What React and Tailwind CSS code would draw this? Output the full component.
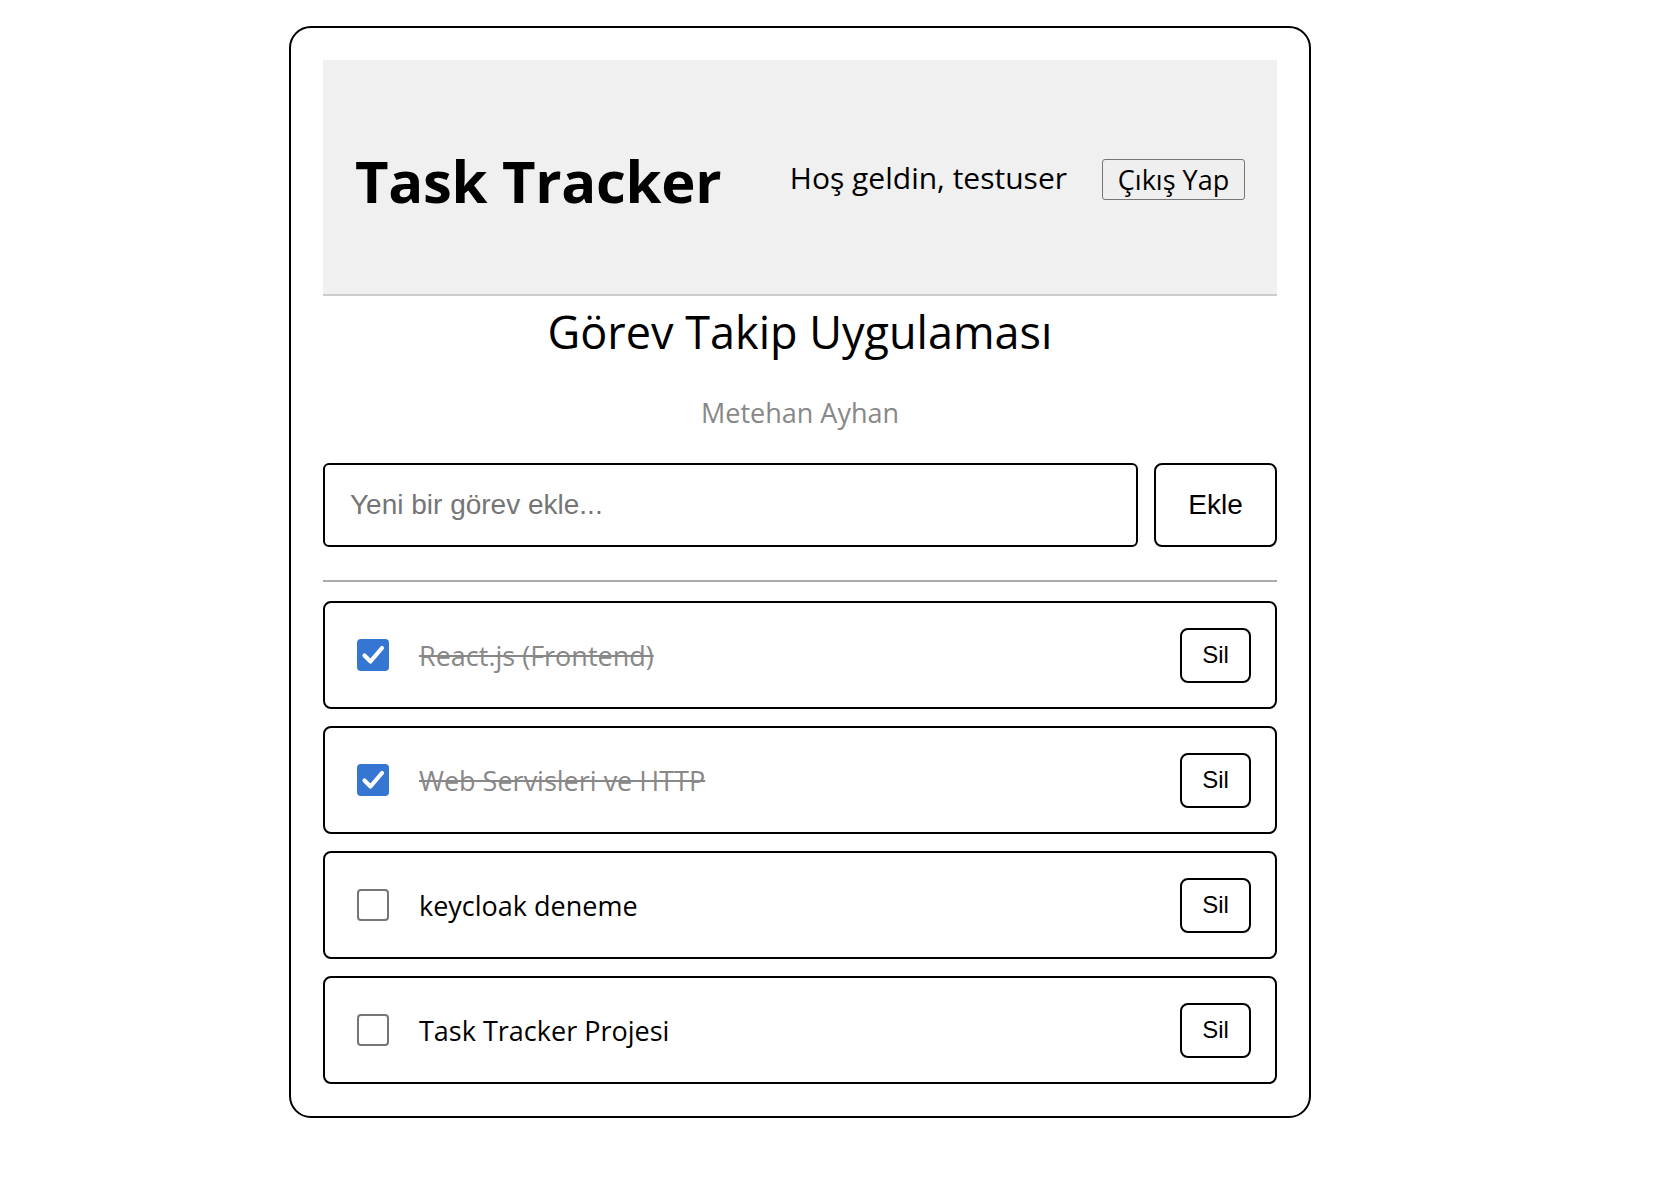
import React from "react";

const tasks = [
  { text: "React.js (Frontend)", done: true },
  { text: "Web Servisleri ve HTTP", done: true },
  { text: "keycloak deneme", done: false },
  { text: "Task Tracker Projesi", done: false },
];

function Checkbox({ checked }) {
  if (checked) {
    return (
      <span className="flex h-[32px] w-[32px] shrink-0 items-center justify-center rounded-[4px] bg-[#3476d2]">
        <svg width="32" height="32" viewBox="0 0 32 32" fill="none">
          <polyline
            points="7.5,16.5 13.5,22.5 25,9"
            stroke="white"
            strokeWidth="4.2"
            strokeLinecap="round"
            strokeLinejoin="round"
          />
        </svg>
      </span>
    );
  }
  return (
    <span className="h-[32px] w-[32px] shrink-0 rounded-[4px] border-2 border-[#767676] bg-white" />
  );
}

export default function App() {
  return (
    <div className="min-h-screen bg-white pt-[26px] font-['Open_Sans',sans-serif] text-black">
      <div className="ml-[289px] w-[1022px] rounded-[22px] border-2 border-black p-[32px]">
        <header className="flex h-[236px] items-center border-b-2 border-[#cccccc] bg-[#f0f0f0] px-[32px]">
          <h1 className="mt-[7px] text-[58px] font-bold leading-[80px] tracking-[-0.3px]">
            Task Tracker
          </h1>
          <span className="ml-auto text-[30px] leading-[41px]">Hoş geldin, testuser</span>
          <button
            type="button"
            className="ml-[35px] mt-[5px] flex h-[41px] w-[143px] items-center justify-center rounded-[3px] border-[1.5px] border-[#767676] bg-[#efefef] text-[27px] leading-[35px]"
          >
            Çıkış Yap
          </button>
        </header>

        <h2 className="mt-[6px] text-center text-[45px] font-normal leading-[60px]">
          Görev Takip Uygulaması
        </h2>
        <p className="mt-[33px] text-center text-[27px] leading-[36px] text-[#888888]">
          Metehan Ayhan
        </p>

        <div className="mt-[32px] flex gap-[16px]">
          <input
            type="text"
            placeholder="Yeni bir görev ekle..."
            className="h-[84px] min-w-0 flex-1 rounded-[6px] border-2 border-black bg-white px-[25px] font-['Liberation_Sans',Arial,sans-serif] text-[28px] outline-none placeholder:text-[#757575]"
          />
          <button
            type="button"
            className="flex h-[84px] w-[123px] items-center justify-center rounded-[8px] border-2 border-black bg-white font-['Liberation_Sans',Arial,sans-serif] text-[28px] leading-[32px]"
          >
            Ekle
          </button>
        </div>

        <div className="mt-[33px] h-[2px] bg-[#aaaaaa]" />

        <ul className="mt-[19px] flex flex-col gap-[17px]">
          {tasks.map((t) => (
            <li
              key={t.text}
              className="flex h-[108px] items-center rounded-[8px] border-2 border-black pl-[32px] pr-[24px]"
            >
              <Checkbox checked={t.done} />
              <span
                className={
                  "ml-[30px] mt-[2px] flex-1 text-[27px] leading-[38px] " +
                  (t.done ? "text-[#888888] line-through decoration-[#888888]" : "text-black")
                }
              >
                {t.text}
              </span>
              <button
                type="button"
                className="flex h-[55px] w-[71px] items-center justify-center rounded-[8px] border-2 border-black bg-white font-['Liberation_Sans',Arial,sans-serif] text-[24px] leading-[28px]"
              >
                Sil
              </button>
            </li>
          ))}
        </ul>
      </div>
    </div>
  );
}
